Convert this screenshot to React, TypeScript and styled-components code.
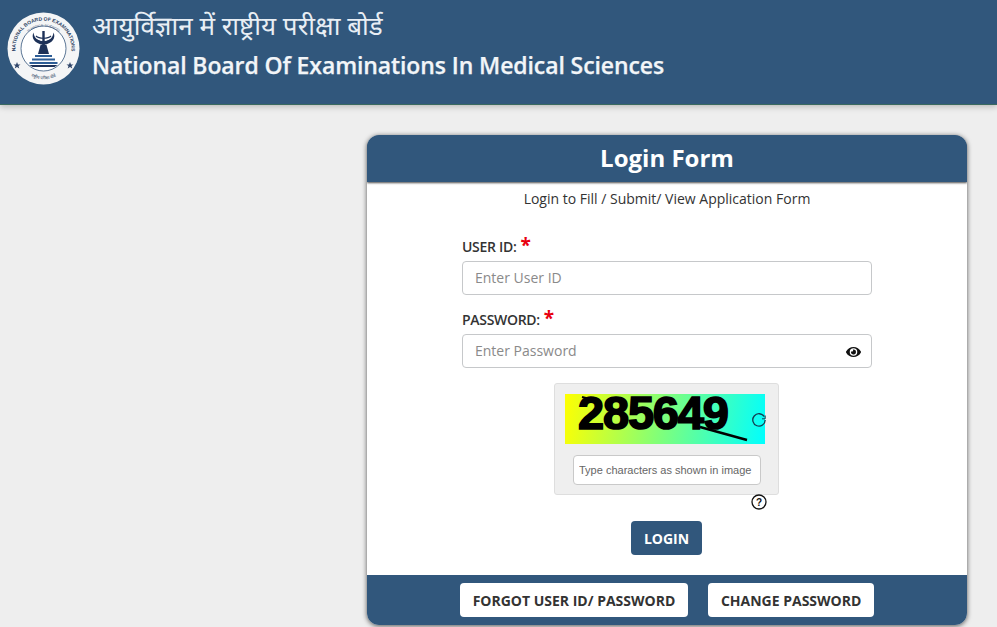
import React from "react";
import styled, { createGlobalStyle } from "styled-components";
import { FaEye } from "react-icons/fa";

const Global = createGlobalStyle`
  html, body { margin: 0; padding: 0; height: 100%; overflow: hidden; background: #eeeeee; }
  * { box-sizing: border-box; }
  body { font-family: "Open Sans", "Liberation Sans", sans-serif; color: #333; }
`;

const Page = styled.div`
  display: flex;
  flex-direction: column;
  height: 627px;
  overflow: hidden;
`;

const Header = styled.header`
  flex: none;
  height: 105px;
  background: #31577c;
  border-bottom: 1px solid #3a6a5f;
  box-shadow: 0 2px 6px rgba(0, 0, 0, 0.22);
  display: flex;
  align-items: flex-start;
  padding: 12px 0 0 7px;
  gap: 12px;
`;

const Logo = styled.svg`
  flex: none;
  width: 73px;
  height: 73px;
`;

const Titles = styled.div`
  display: flex;
  flex-direction: column;
`;

const Hindi = styled.div`
  font-family: "Noto Sans Devanagari", "Lohit Devanagari", "Noto Sans", "DejaVu Sans", sans-serif;
  font-size: 26px;
  line-height: 32px;
  color: #e8eef4;
  height: 37px;
  padding-top: 1px;
`;

const English = styled.div`
  font-family: "Open Sans", sans-serif;
  font-weight: 600;
  font-size: 23px;
  letter-spacing: -0.1px;
  line-height: 32px;
  color: #f2f5f8;
  -webkit-text-stroke: 0.25px #f2f5f8;
  white-space: nowrap;
`;

const Main = styled.main`
  flex: 1;
  display: flex;
  justify-content: flex-end;
  padding: 30px 30px 0 0;
`;

const Card = styled.section`
  width: 600px;
  height: 490px;
  background: #fff;
  border-radius: 12px;
  box-shadow: 0 1px 5px rgba(0, 0, 0, 0.65);
  display: flex;
  flex-direction: column;
  overflow: hidden;
`;

const CardTitle = styled.h1`
  flex: none;
  margin: 0;
  height: 47px;
  background: #31577c;
  color: #fff;
  font-size: 24px;
  font-weight: 700;
  line-height: 45px;
  text-align: center;
  box-shadow: 0 1px 2px rgba(0, 0, 0, 0.7);
`;

const Subtitle = styled.p`
  margin: 7px 0 0;
  font-size: 14px;
  line-height: 19px;
  text-align: center;
  color: #333;
`;

const Form = styled.form`
  flex: 1;
  width: 410px;
  margin: 0 auto;
  padding-top: 28px;
  display: flex;
  flex-direction: column;
`;

const Label = styled.label`
  display: flex;
  align-items: flex-start;
  height: 25px;
  font-size: 14px;
  font-weight: 600;
  line-height: 21px;
  color: #333;
  letter-spacing: -0.3px;
`;

const Star = styled.span`
  color: #e8000f;
  font-size: 19px;
  font-weight: 700;
  line-height: 18px;
  margin-left: 4px;
`;

const InputWrap = styled.div`
  position: relative;
  height: 34px;
  margin-bottom: 14px;
`;

const Input = styled.input`
  width: 100%;
  height: 34px;
  border: 1px solid #c6c8ca;
  border-radius: 4px;
  padding: 0 12px 2px;
  font-family: inherit;
  font-size: 14px;
  background: #fff;
  &::placeholder { color: #8a8a8a; opacity: 1; }
`;

const EyeIcon = styled(FaEye)`
  position: absolute;
  right: 11px;
  top: 10.5px;
  width: 15px;
  height: 14px;
  color: #111;
`;

const CaptchaBox = styled.div`
  align-self: center;
  width: 225px;
  height: 112px;
  margin: 1px 1px 0 0;
  background: #efefef;
  border: 1px solid #dedede;
  border-radius: 3px;
  padding: 10px 0 0 10px;
  display: flex;
  flex-direction: column;
`;

const CaptchaImage = styled.div`
  position: relative;
  flex: none;
  width: 200px;
  height: 50px;
  background: linear-gradient(100deg, #ffff00 0%, #7dff7d 50%, #00ffff 100%);
`;

const CaptchaDigits = styled.span`
  position: absolute;
  left: 13px;
  top: -10px;
  font-family: "Liberation Sans", Arial, sans-serif;
  font-size: 47px;
  font-weight: 700;
  line-height: 58px;
  letter-spacing: -1.2px;
  color: #000;
  -webkit-text-stroke: 1.7px #000;
  white-space: nowrap;
`;

const CaptchaLine = styled.svg`
  position: absolute;
  left: 0;
  top: 0;
  width: 200px;
  height: 50px;
`;

const RefreshIcon = styled.svg`
  position: absolute;
  left: 186px;
  top: 18px;
  width: 16px;
  height: 16px;
`;

const CaptchaInput = styled.input`
  flex: none;
  width: 188px;
  height: 30px;
  margin: 11px 0 0 8px;
  border: 1px solid #c9c9c9;
  border-radius: 4px;
  padding: 0 5px;
  background: #fff;
  font-family: "Liberation Sans", Arial, sans-serif;
  font-size: 11px;
  &::placeholder { color: #666; opacity: 1; }
`;

const HelpRow = styled.div`
  align-self: center;
  width: 225px;
  height: 13px;
  margin-right: 1px;
  display: flex;
  justify-content: flex-end;
  padding-right: 12px;
`;

const HelpIcon = styled.svg`
  width: 16px;
  height: 16px;
  flex: none;
  margin-top: -1px;
`;

const LoginButton = styled.button`
  align-self: center;
  width: 71px;
  height: 34px;
  margin: 13px 1px 0 0;
  border: 0;
  border-radius: 4px;
  background: #31577c;
  color: #fff;
  font-family: inherit;
  font-size: 14px;
  font-weight: 700;
`;

const Footer = styled.footer`
  flex: none;
  height: 50px;
  background: #31577c;
  display: flex;
  justify-content: center;
  gap: 20px;
  padding-top: 8px;
`;

const FooterButton = styled.button`
  height: 34px;
  border: 0;
  border-radius: 4px;
  background: #fff;
  color: #333;
  padding: 0 12.8px;
  font-family: inherit;
  font-size: 14px;
  font-weight: 700;
  white-space: nowrap;
`;

export default function App() {
  return (
    <Page>
      <Global />
      <Header>
        <Logo viewBox="0 0 73 73" role="img" aria-label="NBE seal">
          <defs>
            <path id="arcTop" d="M 9.5 44 A 28 28 0 1 1 63.5 44" />
            <path id="arcInner" d="M 14 30 A 24 24 0 0 1 59 30" />
            <path id="arcBottom" d="M 14 56 A 28 28 0 0 0 59 56" />
          </defs>
          <circle cx="36.5" cy="36.5" r="36" fill="#f4f5f6" />
          <circle cx="36.5" cy="36.500" r="22.500" fill="#fff" stroke="#33557c" strokeWidth="0.8" />
          <text fontFamily="Liberation Sans" fontSize="5" fontWeight="700" fill="#2c3f63">
            <textPath href="#arcTop" startOffset="50%" textAnchor="middle">NATIONAL BOARD OF EXAMINATIONS</textPath>
          </text>
          <text fontFamily="Liberation Sans" fontSize="3" fill="#3a4f75">
            <textPath href="#arcInner" startOffset="50%" textAnchor="middle">IN MEDICAL SCIENCES</textPath>
          </text>
          <text fontFamily="Noto Sans Devanagari, Lohit Devanagari, sans-serif" fontSize="4.2" fill="#2c3f63">
            <textPath href="#arcBottom" startOffset="50%" textAnchor="middle">राष्ट्रीय परीक्षा बोर्ड</textPath>
          </text>
          <path d="M26.500 20.500c-2.500 5 .5 11 10 12.500c9.500-1.500 12.500-7.500 10-12.500c-.5 5-4 8.500-10 9c-6-.5-9.500-4-10-9z" fill="#1d3158" />
          <path d="M29 24c3 3 12 3 15 0M30 28c3 2.500 10 2.500 13 0" stroke="#1d3158" strokeWidth="1.200" fill="none" />
          <rect x="35.300" y="19" width="2.400" height="18" fill="#1d3158" />
          <path d="M33.500 33h6l2.500 9h-11z" fill="#1d3158" />
          <path d="M28 43h17v2h-17z M25 46.500h23v2h-23z M22.500 50h28v2h-28z" fill="#2d5d96" />
          <path d="M22.500 53h28l-3 2h-22z" fill="#1d3158" />
          <path d="M10 50l1 2.400 2.500 0-2 1.500.8 2.500-2.300-1.500-2.300 1.500.8-2.500-2-1.500 2.500 0z" fill="#31466a" />
          <path d="M63 50l1 2.400 2.500 0-2 1.500.8 2.500-2.300-1.500-2.300 1.500.8-2.500-2-1.500 2.500 0z" fill="#31466a" />
        </Logo>
        <Titles>
          <Hindi>आयुर्विज्ञान में राष्ट्रीय परीक्षा बोर्ड</Hindi>
          <English>National Board Of Examinations In Medical Sciences</English>
        </Titles>
      </Header>
      <Main>
        <Card>
          <CardTitle>Login Form</CardTitle>
          <Subtitle>Login to Fill / Submit/ View Application Form</Subtitle>
          <Form onSubmit={(e) => e.preventDefault()}>
            <Label>USER ID:<Star>*</Star></Label>
            <InputWrap>
              <Input placeholder="Enter User ID" />
            </InputWrap>
            <Label>PASSWORD:<Star>*</Star></Label>
            <InputWrap>
              <Input type="password" placeholder="Enter Password" />
              <EyeIcon />
            </InputWrap>
            <CaptchaBox>
              <CaptchaImage>
                <CaptchaDigits>285649</CaptchaDigits>
                <CaptchaLine viewBox="0 0 200 50">
                  <path d="M135 33 L182 46" stroke="#000" strokeWidth="2.500" fill="none" />
                  <path d="M17 3 L25 5" stroke="#000" strokeWidth="2" fill="none" />
                </CaptchaLine>
                <RefreshIcon viewBox="0 0 16 16">
                  <path d="M13.300 4.700 A6.200 6.200 0 1 0 14.200 8" fill="none" stroke="#143c50" strokeWidth="1.300" />
                  <path d="M14.200 3.500 L14.200 6.800 L11 6.800" fill="none" stroke="#143c50" strokeWidth="1" />
                </RefreshIcon>
              </CaptchaImage>
              <CaptchaInput placeholder="Type characters as shown in image" />
            </CaptchaBox>
            <HelpRow>
              <HelpIcon viewBox="0 0 16 16">
                <circle cx="8" cy="8" r="7" fill="none" stroke="#111" strokeWidth="1.300" />
                <text x="8" y="11.500" textAnchor="middle" fontFamily="Liberation Sans" fontSize="10" fontWeight="700" fill="#111">?</text>
              </HelpIcon>
            </HelpRow>
            <LoginButton>LOGIN</LoginButton>
          </Form>
          <Footer>
            <FooterButton>FORGOT USER ID/ PASSWORD</FooterButton>
            <FooterButton>CHANGE PASSWORD</FooterButton>
          </Footer>
        </Card>
      </Main>
    </Page>
  );
}
